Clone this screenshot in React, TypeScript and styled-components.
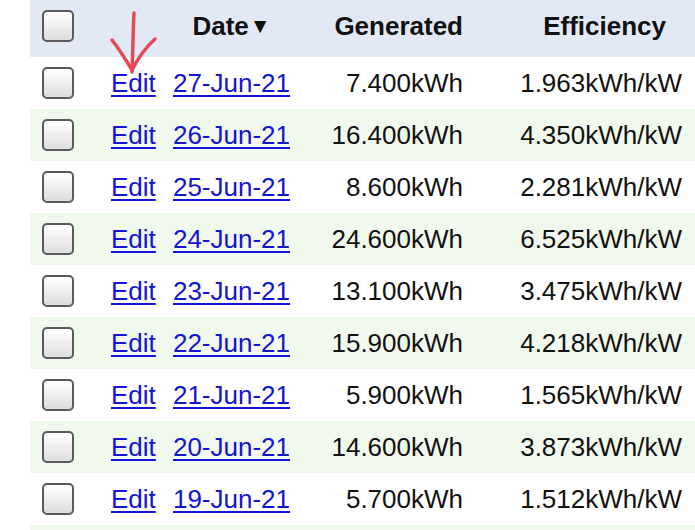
import React from 'react';
import styled, {createGlobalStyle} from 'styled-components';

type Day = {date: string; generated: string; efficiency: string};

const days: Day[] = [
    {date: '27-Jun-21', generated: '7.400kWh', efficiency: '1.963kWh/kW'},
    {date: '26-Jun-21', generated: '16.400kWh', efficiency: '4.350kWh/kW'},
    {date: '25-Jun-21', generated: '8.600kWh', efficiency: '2.281kWh/kW'},
    {date: '24-Jun-21', generated: '24.600kWh', efficiency: '6.525kWh/kW'},
    {date: '23-Jun-21', generated: '13.100kWh', efficiency: '3.475kWh/kW'},
    {date: '22-Jun-21', generated: '15.900kWh', efficiency: '4.218kWh/kW'},
    {date: '21-Jun-21', generated: '5.900kWh', efficiency: '1.565kWh/kW'},
    {date: '20-Jun-21', generated: '14.600kWh', efficiency: '3.873kWh/kW'},
    {date: '19-Jun-21', generated: '5.700kWh', efficiency: '1.512kWh/kW'},
];

const App: React.FunctionComponent = () => {
    return (
        <>
            <GlobalStyle/>
            <Page>
                <Table>
                    <colgroup>
                        <col style={{width: 70}}/>
                        <col style={{width: 62}}/>
                        <col style={{width: 139}}/>
                        <col style={{width: 172}}/>
                        <col style={{width: 222}}/>
                    </colgroup>
                    <thead>
                        <HeadRow>
                            <Cell><Check/></Cell>
                            <Cell/>
                            <HeadCell $align="center">Date<Arrow>▼</Arrow></HeadCell>
                            <HeadCell $align="right" $padRight={10}>Generated</HeadCell>
                            <HeadCell $align="right" $padRight={29}>Efficiency</HeadCell>
                        </HeadRow>
                    </thead>
                    <tbody>
                        {days.map((day, index) => (
                            <Row key={day.date} $striped={index % 2 === 1}>
                                <Cell><Check/></Cell>
                                <Cell $padLeft={11}><Link href="#">Edit</Link></Cell>
                                <Cell $align="center"><Link href="#">{day.date}</Link></Cell>
                                <Cell $align="right" $padRight={10}>{day.generated}</Cell>
                                <Cell $align="right" $padRight={13}>{day.efficiency}</Cell>
                            </Row>
                        ))}
                    </tbody>
                </Table>
                <NextRow/>
                <Mark width="50" height="66" viewBox="0 0 50 66">
                    <path d="M25 3 C24 20 24 40 23 62" />
                    <path d="M3 30 C11 40 17 50 23 60 C28 50 36 38 46 29" />
                </Mark>
            </Page>
        </>
    );
}

const GlobalStyle = createGlobalStyle`
    html, body {
        margin: 0;
        padding: 0;
        background: #ffffff;
        overflow: hidden;
    }
    body {
        font-family: "Liberation Sans", Arial, sans-serif;
    }
`;

const Page = styled.div`
    position: relative;
    width: 695px;
    height: 530px;
    overflow: hidden;
`;

const Table = styled.table`
    margin: -5px 0 0 30px;
    width: 665px;
    border-collapse: collapse;
    table-layout: fixed;
    font-size: 26px;
    color: #111111;
`;

const HeadRow = styled.tr`
    height: 62px;
    background: #e2e9f5;
`;

const Row = styled.tr<{$striped: boolean}>`
    height: 52px;
    background: ${({$striped}) => $striped ? '#f1f8ee' : '#ffffff'};
`;

const NextRow = styled.div`
    margin-left: 30px;
    height: 52px;
    background: #f1f8ee;
`;

const Cell = styled.td<{$align?: string; $padLeft?: number; $padRight?: number}>`
    padding: 0 ${({$padRight}) => $padRight ?? 0}px 0 ${({$padLeft}) => $padLeft ?? 0}px;
    text-align: ${({$align}) => $align || 'left'};
    vertical-align: middle;
    white-space: nowrap;
    overflow: visible;
`;

const HeadCell = styled(Cell).attrs({as: 'th'})`
    font-weight: bold;
    padding-top: 0;
`;

const Arrow = styled.span`
    font-size: 21px;
    margin-left: 1px;
    position: relative;
    top: -2px;
`;

const Check = styled.span`
    display: block;
    margin-left: 12px;
    width: 28px;
    height: 28px;
    border: 2px solid #5a5a5a;
    border-radius: 5px;
    background: linear-gradient(#ffffff, #dedede);
`;

const Link = styled.a`
    color: #1414d2;
    text-decoration: underline;
    text-decoration-thickness: 2px;
    text-underline-offset: 3px;
`;

const Mark = styled.svg`
    position: absolute;
    left: 109px;
    top: 10px;
    fill: none;
    stroke: #e34a55;
    stroke-width: 3.5px;
    stroke-linecap: round;
    stroke-linejoin: round;
`;

export default App;
